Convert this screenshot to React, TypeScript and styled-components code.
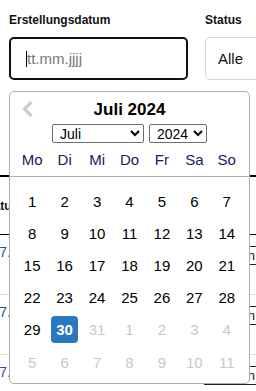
import * as React from "react";
import styled, { createGlobalStyle } from "styled-components";

const GlobalStyle = createGlobalStyle`
  html, body {
    margin: 0;
    background: #fff;
    overflow: hidden;
  }
  body {
    font-family: "Liberation Sans", Arial, sans-serif;
    color: #111;
  }
`;

const Page = styled.div`
  position: relative;
  width: 256px;
  height: 391px;
  padding-top: 13px;
  box-sizing: border-box;
  overflow: hidden;
`;

const Filters = styled.div`
  display: flex;
  gap: 17px;
  padding-left: 9px;
`;

const Field = styled.div`
  display: flex;
  flex-direction: column;
  gap: 10px;
`;

const Label = styled.label`
  font-size: 12px;
  line-height: 14px;
  font-weight: 700;
  color: #111;
`;

const DateBox = styled.div`
  width: 179px;
  height: 43px;
  box-sizing: border-box;
  border: 2px solid #111;
  border-radius: 5px;
  display: flex;
  align-items: center;
  padding-left: 15px;
`;

const Caret = styled.span`
  width: 1px;
  height: 16px;
  background: #000;
`;

const Placeholder = styled.span`
  font-size: 15px;
  color: #777;
`;

const StatusBox = styled.div`
  width: 90px;
  height: 43px;
  box-sizing: border-box;
  border: 1px solid #d6d6d6;
  border-radius: 5px;
  display: flex;
  align-items: center;
  padding-left: 12px;
  font-size: 15px;
  color: #111;
`;

const TableArea = styled.div`
  margin-top: 95px;
  overflow: hidden;
`;

const Table = styled.table`
  margin-left: -36px;
  width: 313px;
  border-collapse: collapse;
  border-top: 2px solid #000;
`;

const HeadCell = styled.th<{ $indent?: number }>`
  height: 57px;
  padding: 0 8px 0 ${p => p.$indent ?? 8}px;
  text-align: left;
  font-size: 12px;
  font-weight: 700;
  border-bottom: 1px solid #000;
`;

const Row = styled.tr`
  height: 60px;
  border-bottom: 1px solid #dcdcdc;
`;

const DateCell = styled.td`
  vertical-align: top;
  padding: 9px 8px 0;
  font-size: 14px;
  color: #1d4f9c;
`;

const ActionCell = styled.td`
  vertical-align: top;
  text-align: right;
  padding: 11px 10px 0 0;
`;

const ActionButton = styled.span`
  display: inline-block;
  height: 19px;
  line-height: 17px;
  box-sizing: border-box;
  padding: 0 12px;
  border-top: 1px solid #222;
  border-bottom: 1px solid #222;
  font-size: 13px;
  color: #111;
`;

const Popup = styled.div`
  position: absolute;
  top: 91px;
  left: 9px;
  width: 241px;
  height: 293px;
  box-sizing: border-box;
  background: #fff;
  border: 1px solid #aeaeae;
  border-radius: 5px;
  z-index: 2;
`;

const PopupHeader = styled.div`
  position: relative;
  padding: 8px 6px 6px;
  border-bottom: 1px solid #aeaeae;
  text-align: center;
`;

const PrevButton = styled.span`
  position: absolute;
  left: 12px;
  top: 8px;
  display: flex;
`;

const Title = styled.div`
  font-size: 17px;
  line-height: 20px;
  font-weight: 700;
  color: #000;
`;

const Selects = styled.div`
  display: flex;
  justify-content: center;
  gap: 5px;
  margin-top: 4px;
`;

const Select = styled.select<{ $w: number }>`
  width: ${p => p.$w}px;
  height: 19px;
  box-sizing: border-box;
  padding: 0 0 0 3px;
  font-family: "Liberation Sans", Arial, sans-serif;
  font-size: 14px;
  color: #000;
  background: #fff;
  border: 1px solid #6e6e6e;
  border-radius: 2px;
`;

const WeekGrid = styled.div`
  display: grid;
  grid-template-columns: repeat(7, 1fr);
`;

const DayNames = styled(WeekGrid)`
  margin-top: 7px;
  line-height: 20px;
  font-size: 15px;
  color: #18215e;
`;

const DayGrid = styled(WeekGrid)`
  padding: 8px 6px 0;
  grid-auto-rows: 32.2px;
`;

const Day = styled.div<{ $muted?: boolean; $selected?: boolean }>`
  display: flex;
  align-items: center;
  justify-content: center;
  font-size: 15px;
  color: ${p => (p.$muted ? "#c8c8c8" : "#000")};

  span {
    display: flex;
    align-items: center;
    justify-content: center;
    width: 27px;
    height: 27px;
    border-radius: 4px;
    background: ${p => (p.$selected ? "#2a79bf" : "transparent")};
    color: ${p => (p.$selected ? "#fff" : "inherit")};
    font-weight: ${p => (p.$selected ? 700 : 400)};
  }
`;

const months = [
  "Januar", "Februar", "März", "April", "Mai", "Juni",
  "Juli", "August", "September", "Oktober", "November", "Dezember",
];
const years = [2020, 2021, 2022, 2023, 2024, 2025, 2026];
const weekdays = ["Mo", "Di", "Mi", "Do", "Fr", "Sa", "So"];

const days = [
  ...Array.from({ length: 30 }, (_, i) => ({ n: i + 1, muted: false })),
  { n: 31, muted: true },
  ...Array.from({ length: 11 }, (_, i) => ({ n: i + 1, muted: true })),
];

const App = () => (
  <Page>
    <GlobalStyle />
    <Filters>
      <Field>
        <Label>Erstellungsdatum</Label>
        <DateBox>
          <Caret />
          <Placeholder>tt.mm.jjjj</Placeholder>
        </DateBox>
      </Field>
      <Field>
        <Label>Status</Label>
        <StatusBox>Alle</StatusBox>
      </Field>
    </Filters>

    <TableArea>
      <Table>
        <thead>
          <tr>
            <HeadCell $indent={21}>Datum</HeadCell>
            <HeadCell>Status</HeadCell>
            <HeadCell />
          </tr>
        </thead>
        <tbody>
          {["30.07.2024", "29.07.2024", "27.07.2024"].map(d => (
            <Row key={d}>
              <DateCell>{d}</DateCell>
              <DateCell />
              <ActionCell>
                <ActionButton>Öffnen</ActionButton>
              </ActionCell>
            </Row>
          ))}
        </tbody>
      </Table>
    </TableArea>

    <Popup>
      <PopupHeader>
        <PrevButton>
          <svg width="12" height="18" viewBox="0 0 12 18">
            <polyline
              points="9.5,2 2.5,9 9.5,16"
              fill="none"
              stroke="#cccccc"
              strokeWidth="3.2"
            />
          </svg>
        </PrevButton>
        <Title>Juli 2024</Title>
        <Selects>
          <Select $w={92} defaultValue="Juli">
            {months.map(m => (
              <option key={m}>{m}</option>
            ))}
          </Select>
          <Select $w={58} defaultValue="2024">
            {years.map(y => (
              <option key={y}>{y}</option>
            ))}
          </Select>
        </Selects>
        <DayNames>
          {weekdays.map(w => (
            <div key={w}>{w}</div>
          ))}
        </DayNames>
      </PopupHeader>
      <DayGrid>
        {days.map((d, i) => (
          <Day key={i} $muted={d.muted} $selected={!d.muted && d.n === 30}>
            <span>{d.n}</span>
          </Day>
        ))}
      </DayGrid>
    </Popup>
  </Page>
);

export default App;
